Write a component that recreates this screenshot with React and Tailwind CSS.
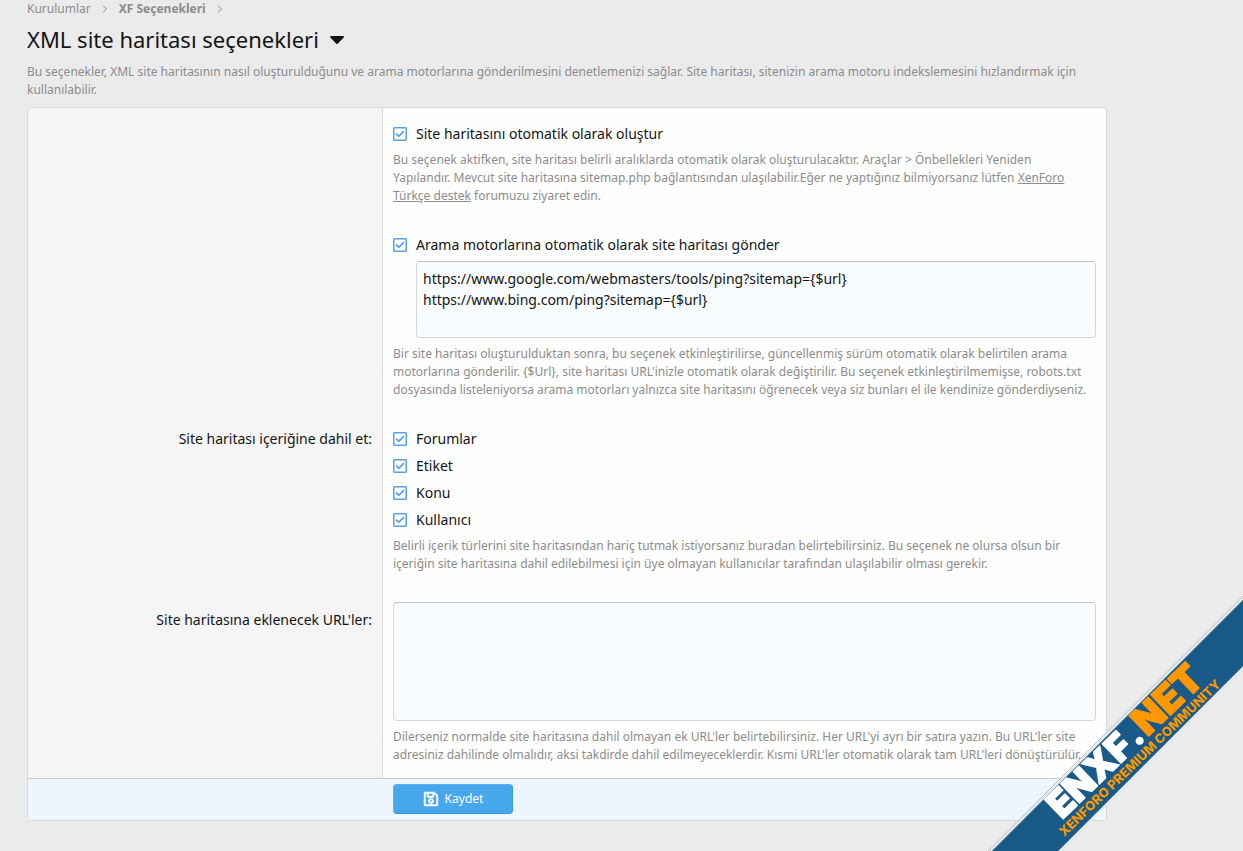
import { useState } from "react";
import { FaCaretDown, FaRegCheckSquare, FaRegSave, FaRegSquare } from "react-icons/fa";
import { FiChevronRight } from "react-icons/fi";

const CONTENT_TYPES = ["Forumlar", "Etiket", "Konu", "Kullanıcı"];

const PING_URLS = `https://www.google.com/webmasters/tools/ping?sitemap={$url}
https://www.bing.com/ping?sitemap={$url}`;

function Checkbox({ label }) {
	const [checked, setChecked] = useState(true);
	const Icon = checked ? FaRegCheckSquare : FaRegSquare;

	return (
		<label className="flex items-center gap-[9px] text-sm leading-[21px]">
			<span className="grid w-[14px] place-items-center text-[#5ba3e0]">
				<input
					type="checkbox"
					className="col-start-1 row-start-1 size-[14px] appearance-none"
					checked={checked}
					onChange={(e) => setChecked(e.target.checked)}
				/>
				<Icon className="pointer-events-none col-start-1 row-start-1 h-4 w-[14px]" />
			</span>
			{label}
		</label>
	);
}

function Hint({ children }) {
	return <p className="mt-[7px] text-xs leading-[18px] text-[#8c8c8c]">{children}</p>;
}

function Row({ label, children }) {
	return (
		<div className="flex">
			<div className="w-[33%] max-w-[355px] shrink-0 border-r border-[#d8d8d8] bg-[#f5f5f5] pt-[15px] pr-2.5 text-right text-sm leading-[21px]">
				{label}
			</div>
			<div className="min-w-0 grow px-2.5 pt-[15px] pb-3.5">{children}</div>
		</div>
	);
}

function Ribbon() {
	return (
		<svg
			className="pointer-events-none fixed right-0 bottom-0 size-64"
			viewBox="0 0 256 256"
			aria-hidden="true"
		>
			<path d="M0 258 258 0V72L72 258Z" fill="#dfe7ea" />
			<path d="M0 257 257 0M70 257 257 70" stroke="#b9c2c6" strokeWidth="1" fill="none" />
			<path d="M3 258 258 3V69L69 258Z" fill="#195a88" />
			<g
				transform="translate(75 225) rotate(-44)"
				fontFamily="Inter, sans-serif"
				fontWeight="900"
				strokeLinejoin="round"
			>
				<text fontSize="37" fill="#fff" stroke="#fff" strokeWidth="1.5">
					ENXF
					<tspan x="106" fontFamily="Lato, sans-serif" fontSize="40">
						.
					</tspan>
				</text>
				<text x="119" fontSize="39" fill="#ff9800" stroke="#ff9800" strokeWidth="1.5">
					NET
				</text>
				<text x="-10" y="14" fontSize="13" fontWeight="800" fill="#ff9800">
					XENFORO PREMIUM COMMUNITY
				</text>
			</g>
		</svg>
	);
}

export default function App() {
	const [pingUrls, setPingUrls] = useState(PING_URLS);
	const [extraUrls, setExtraUrls] = useState("");

	const fieldClass =
		"block w-full resize-none rounded border border-[#d8d8d8] border-t-[#c0c4c8] bg-[#f8fcff] p-1.5 text-sm leading-[21px] outline-none";

	return (
		<div className="min-h-screen bg-[#ebebeb] px-[27px] pb-[30px] font-['Noto_Sans','Open_Sans',sans-serif] text-[#141414]">
			<main className="max-w-[1080px]">
				<nav className="flex items-center gap-2 text-xs leading-[18px] text-[#8c8c8c]">
					<a href="#kurulumlar">Kurulumlar</a>
					<FiChevronRight className="size-3" />
					<a href="#secenekler" className="font-bold">
						XF Seçenekleri
					</a>
					<FiChevronRight className="size-3" />
				</nav>

				<h1 className="mt-1.5 mb-[9px] text-[22px] leading-[30px]">
					<button type="button" className="flex items-center gap-1.5">
						XML site haritası seçenekleri
						<FaCaretDown className="size-6" />
					</button>
				</h1>
				<Hint>
					Bu seçenekler, XML site haritasının nasıl oluşturulduğunu ve arama motorlarına
					gönderilmesini denetlemenizi sağlar. Site haritası, sitenizin arama motoru
					indekslemesini hızlandırmak için kullanılabilir.
				</Hint>

				<form
					className="mt-2 overflow-hidden rounded border border-[#d8d8d8] bg-[#fefefe]"
					onSubmit={(e) => e.preventDefault()}
				>
					<Row>
						<Checkbox label="Site haritasını otomatik olarak oluştur" />
						<Hint>
							Bu seçenek aktifken, site haritası belirli aralıklarda otomatik olarak
							oluşturulacaktır. Araçlar &gt; Önbellekleri Yeniden
							<br />
							Yapılandır. Mevcut site haritasına sitemap.php bağlantısından
							ulaşılabilir.Eğer ne yaptığınız bilmiyorsanız lütfen{" "}
							<a href="#destek" className="underline">
								XenForo Türkçe destek
							</a>{" "}
							forumuzu ziyaret edin.
						</Hint>
					</Row>

					<Row>
						<Checkbox label="Arama motorlarına otomatik olarak site haritası gönder" />
						<div className="mt-1.5 pl-[23px]">
							<textarea
								className={`${fieldClass} h-[77px]`}
								aria-label="Arama motorlarına otomatik olarak site haritası gönder"
								value={pingUrls}
								onChange={(e) => setPingUrls(e.target.value)}
							/>
						</div>
						<Hint>
							Bir site haritası oluşturulduktan sonra, bu seçenek etkinleştirilirse,
							güncellenmiş sürüm otomatik olarak belirtilen arama motorlarına gönderilir.
							{" {$Url}"}, site haritası URL'inizle otomatik olarak değiştirilir. Bu seçenek
							etkinleştirilmemişse, robots.txt dosyasında listeleniyorsa arama motorları
							yalnızca site haritasını öğrenecek veya siz bunları el ile kendinize
							gönderdiyseniz.
						</Hint>
					</Row>

					<Row label="Site haritası içeriğine dahil et:">
						<div className="flex flex-col gap-1.5">
							{CONTENT_TYPES.map((type) => (
								<Checkbox key={type} label={type} />
							))}
						</div>
						<Hint>
							Belirli içerik türlerini site haritasından hariç tutmak istiyorsanız buradan
							belirtebilirsiniz. Bu seçenek ne olursa olsun bir içeriğin site haritasına
							dahil edilebilmesi için üye olmayan kullanıcılar tarafından ulaşılabilir
							olması gerekir.
						</Hint>
					</Row>

					<Row
						label={
							<label htmlFor="extra-urls" className="block pt-[7px]">
								Site haritasına eklenecek URL'ler:
							</label>
						}
					>
						<textarea
							id="extra-urls"
							className={`${fieldClass} h-[119px]`}
							value={extraUrls}
							onChange={(e) => setExtraUrls(e.target.value)}
						/>
						<Hint>
							Dilerseniz normalde site haritasına dahil olmayan ek URL'ler belirtebilirsiniz.
							Her URL'yi ayrı bir satıra yazın. Bu URL'ler site adresiniz dahilinde
							olmalıdır, aksi takdirde dahil edilmeyeceklerdir. Kısmi URL'ler otomatik olarak
							tam URL'leri dönüştürülür.
						</Hint>
					</Row>

					<div className="flex border-t border-[#c5cacf] bg-[#edf6fd] pt-[5px] pb-1.5">
						<div className="w-[33%] max-w-[355px] shrink-0" />
						<div className="px-2.5">
							<button
								type="submit"
								className="flex h-[30px] w-[120px] items-center justify-center gap-1.5 rounded border border-[#5cb1ed] border-r-[#3a9be3] border-b-[#3a9be3] bg-[#47a7eb] text-xs text-white"
							>
								<FaRegSave className="size-4" stroke="currentColor" strokeWidth="16" />
								Kaydet
							</button>
						</div>
					</div>
				</form>
			</main>

			<Ribbon />
		</div>
	);
}
